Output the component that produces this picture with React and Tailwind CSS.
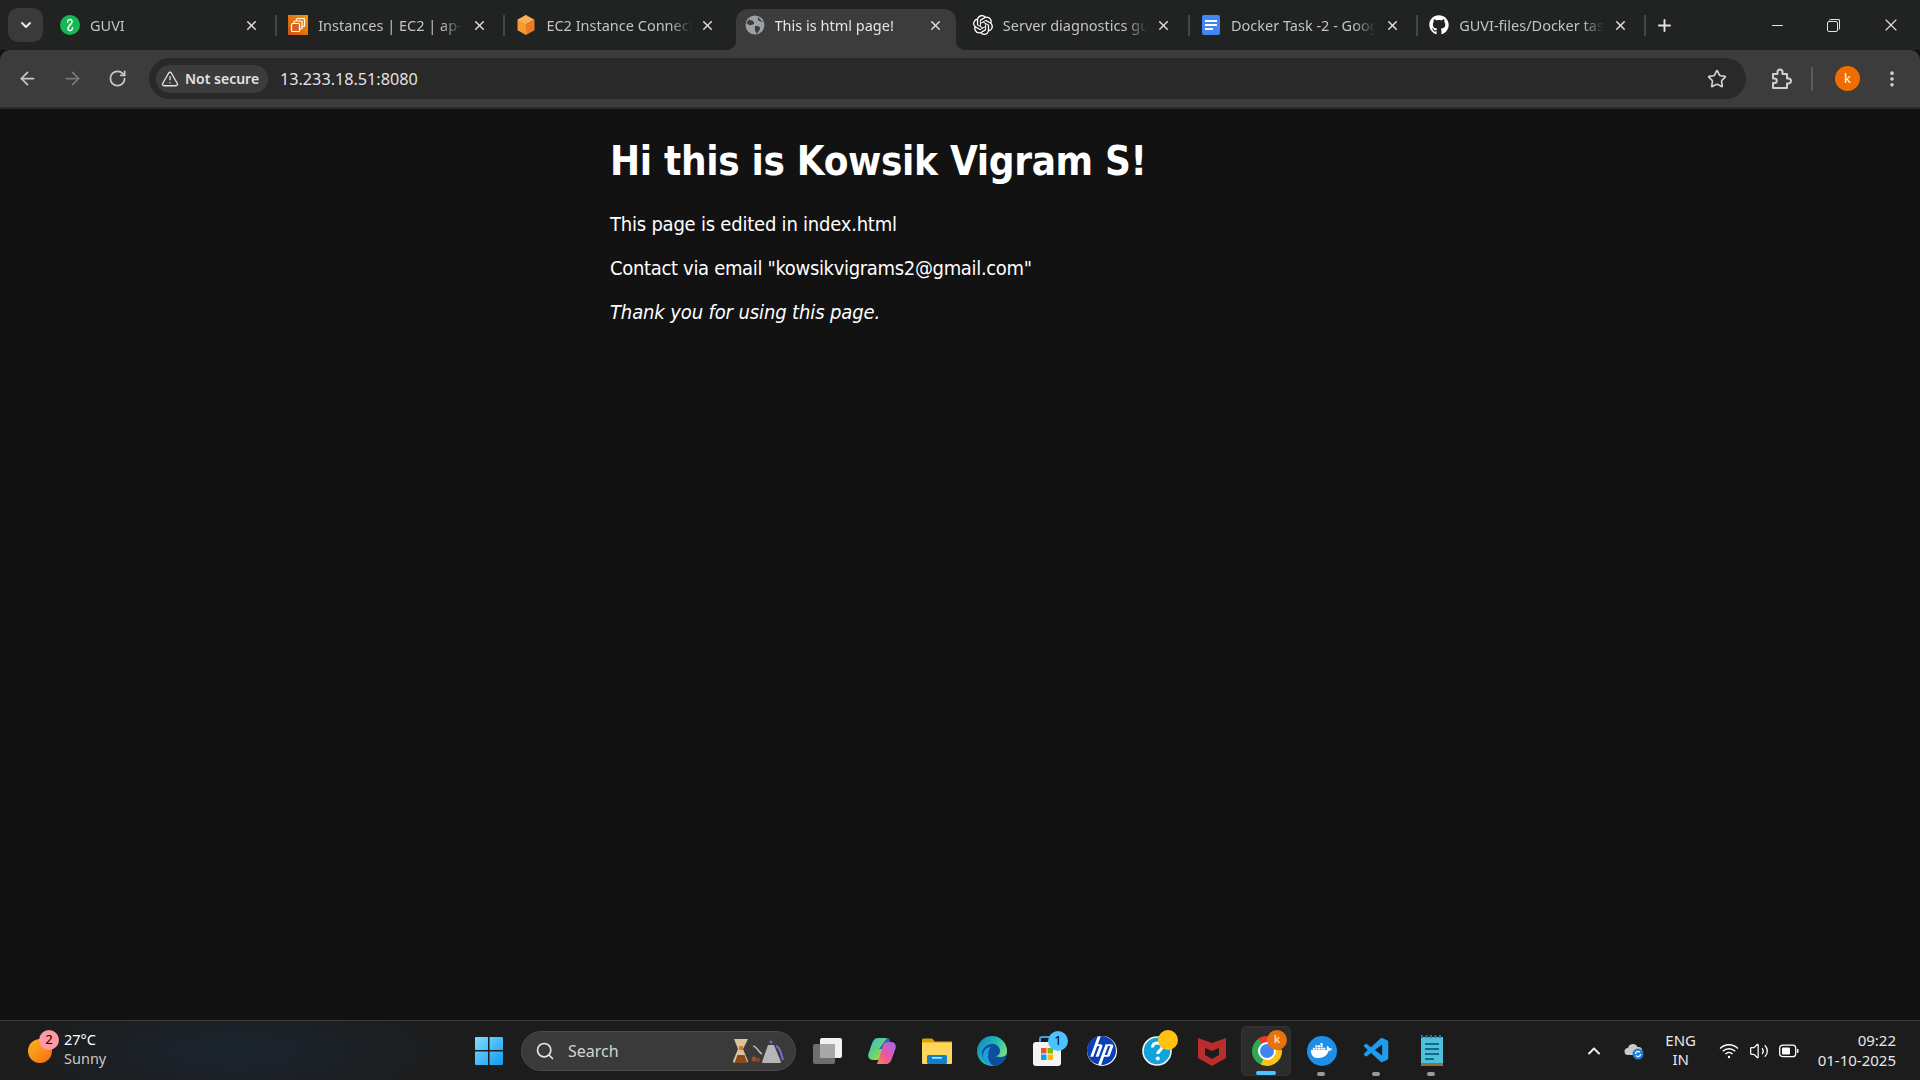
import React from "react";
import { ArrowLeft, ArrowRight, RotateCw, Star, EllipsisVertical, X, Plus, Minus, TriangleAlert, Search, ChevronDown, ChevronUp, Volume2 } from "lucide-react";
import { FaGithub } from "react-icons/fa";
import { SiOpenai, SiDocker, SiHp } from "react-icons/si";
import { VscVscode } from "react-icons/vsc";

/* ───────── Favicons ───────── */
const GuviIcon = () => (
  <svg width="20" height="20" viewBox="0 0 20 20">
    <circle cx="10" cy="10" r="10" fill="#16b853" />
    <path d="M10 4.500a2.200 2.200 0 0 1 1.200 4L9 11.500a2.200 2.200 0 1 0 3 .6M10 15.500a2.200 2.200 0 0 1-1.200-4L11 8.500a2.200 2.200 0 1 0-3-.6" fill="none" stroke="#fff" strokeWidth="1.400" />
  </svg>
);

const AwsInstancesIcon = () => (
  <svg width="20" height="20" viewBox="0 0 20 20">
    <defs>
      <linearGradient id="awsOrange" x1="0" y1="1" x2="1" y2="0">
        <stop offset="0" stopColor="#c8511b" />
        <stop offset="1" stopColor="#ff9900" />
      </linearGradient>
    </defs>
    <rect width="20" height="20" fill="url(#awsOrange)" />
    <rect x="8.500" y="3.500" width="8" height="8" rx="1" fill="none" stroke="#fff" strokeWidth="1.200" />
    <rect x="6" y="6" width="8" height="8" rx="1" fill="#e2701f" stroke="#fff" strokeWidth="1.200" />
    <rect x="3.500" y="8.500" width="8" height="8" rx="1" fill="#d9631d" stroke="#fff" strokeWidth="1.200" />
  </svg>
);

const CubeIcon = () => (
  <svg width="20" height="20" viewBox="0 0 20 20">
    <path d="M10 0L1.500 4.800v10.400L10 20z" fill="#f79a35" />
    <path d="M10 0l8.500 4.800L10 9.500 1.500 4.800z" fill="#fab04f" />
    <path d="M10 9.500l8.500-4.700v10.400L10 20z" fill="#ec7a22" />
  </svg>
);

const GlobeIcon = () => (
  <svg width="20" height="20" viewBox="0 0 20 20">
    <circle cx="10" cy="10" r="9.500" fill="#9aa0a6" />
    <path d="M4 4.500c2 .5 4.500 1 5 3s-1.500 2-3 2.500S3 9.500 1.500 8M12.500 1.500c1 1.500 0 3 1 4s3 .5 5 2.500M11 11c2 0 4 .5 4 2.500s-2 3-3 5.500c-1-2-2-2.500-2-4.500S9.500 11 11 11z" fill="#3c3c3c" />
  </svg>
);

const DocsIcon = () => (
  <svg width="20" height="20" viewBox="0 0 20 20">
    <rect x="1" width="18" height="20" rx="2" fill="#4285f4" />
    <path d="M4 5h12v2H4zM4 9h12v2H4zM4 13h8v2H4z" fill="#fff" />
  </svg>
);

const ExtensionIcon = () => (
  <svg width="22" height="22" viewBox="0 0 22 22" fill="none" stroke="#d0d0d0" strokeWidth="2" strokeLinejoin="round">
    <path d="M3 6h4.500V4a2.500 2.500 0 0 1 5 0v2H17v4.500h1.500a2.500 2.500 0 0 1 0 5H17V20H3v-5h1.500a2 2 0 0 0 0-4.500H3z" />
  </svg>
);

/* ───────── Taskbar icons ───────── */
const WindowsIcon = () => (
  <svg width="30" height="30" viewBox="0 0 30 30">
    <defs>
      <linearGradient id="winBlue" x1="0" y1="0" x2="1" y2="1">
        <stop offset="0" stopColor="#7fdcff" />
        <stop offset="1" stopColor="#0f9bf0" />
      </linearGradient>
    </defs>
    <path d="M1 2a1 1 0 0 1 1-1h12v13H1zM15.500 1H28a1 1 0 0 1 1 1v12H15.500zM1 15.500h13V29H2a1 1 0 0 1-1-1zM15.500 15.500H29V28a1 1 0 0 1-1 1H15.500z" fill="url(#winBlue)" />
  </svg>
);

const TaskViewIcon = () => (
  <svg width="30" height="30" viewBox="0 0 30 30">
    <rect x="1" y="8" width="22" height="20" rx="2" fill="#6e6e6e" />
    <rect x="8" y="2" width="22" height="20" rx="2" fill="#f2f2f2" />
    <rect x="8" y="8" width="15" height="14" fill="#a8a8a8" />
  </svg>
);

const CopilotIcon = () => (
  <svg width="30" height="30" viewBox="0 0 30 30">
    <defs>
      <linearGradient id="copA" x1="0" y1="0" x2="1" y2="1">
        <stop offset="0" stopColor="#2fb7f0" />
        <stop offset="0.550" stopColor="#6ed46a" />
        <stop offset="1" stopColor="#f7c93e" />
      </linearGradient>
      <linearGradient id="copB" x1="1" y1="0" x2="0" y2="1">
        <stop offset="0" stopColor="#a06bf0" />
        <stop offset="0.600" stopColor="#f0569c" />
        <stop offset="1" stopColor="#f78a3c" />
      </linearGradient>
    </defs>
    <path d="M11 2h9l-6 18c-.7 2.500-2 4-4.500 4H6c-4 0-5.500-3-4.500-6.500l3.500-10C6 4 8 2 11 2z" fill="url(#copA)" />
    <path d="M19 28h-9l6-18c.7-2.500 2-4 4.500-4H24c4 0 5.500 3 4.500 6.500l-3.500 10C24 26 22 28 19 28z" fill="url(#copB)" />
    <path d="M20 2c2 0 3 1.500 3 4h-2.500c-2.500 0-3.800 1.500-4.500 4l-1 3h-3z" fill="#2a60d8" />
  </svg>
);

const FolderIcon = () => (
  <svg width="30" height="30" viewBox="0 0 30 30">
    <path d="M0 4a1.500 1.500 0 0 1 1.500-1.500H10l3 3h17V8H0z" fill="#e0a100" />
    <path d="M0 6.500h30V27a1 1 0 0 1-1 1H1a1 1 0 0 1-1-1z" fill="#ffd65c" />
    <rect x="5" y="19" width="20" height="9" rx="1.500" fill="#0f7fce" />
    <rect x="10" y="21" width="10" height="1.600" fill="#bfe6ff" />
  </svg>
);

const EdgeIcon = () => (
  <svg width="30" height="30" viewBox="0 0 30 30">
    <defs>
      <linearGradient id="edgeTop" x1="0" y1="0" x2="1" y2="0.600">
        <stop offset="0" stopColor="#1278c8" />
        <stop offset="0.600" stopColor="#27c0b4" />
        <stop offset="1" stopColor="#7fe27a" />
      </linearGradient>
    </defs>
    <circle cx="15" cy="15" r="15" fill="url(#edgeTop)" />
    <path d="M30 16c0 3-3 5-7 5-3 0-4-1-5-1 3 0 5-2 5-5 0-5-5-8-9-7-6 1-9 6-9 9 0 7 5 13 12 13 7 0 13-6 13-14z" fill="#0c4f9e" />
    <path d="M14 11c-5 0-8 4-8 9 0 5 4 10 11 10-4-2-6-6-6-10 0-4 1-7 3-9z" fill="#1ea0e0" />
  </svg>
);

const StoreIcon = () => (
  <svg width="30" height="30" viewBox="0 0 30 30">
    <path d="M8 6V3a2 2 0 0 1 2-2h10a2 2 0 0 1 2 2v3" fill="none" stroke="#3aa0e0" strokeWidth="2" />
    <rect x="1" y="6" width="28" height="24" rx="3" fill="#f4f4f4" />
    <rect x="9" y="12" width="5.500" height="5.500" fill="#f25022" />
    <rect x="15.500" y="12" width="5.500" height="5.500" fill="#7fba00" />
    <rect x="9" y="18.500" width="5.500" height="5.500" fill="#00a4ef" />
    <rect x="15.500" y="18.500" width="5.500" height="5.500" fill="#ffb900" />
  </svg>
);

const HelpIcon = () => (
  <svg width="30" height="30" viewBox="0 0 30 30">
    <circle cx="15" cy="15" r="14" fill="#11a3dc" stroke="#f4f4f4" strokeWidth="1.600" />
    <path d="M10.500 11.500c0-3 2-4.500 4.800-4.500s4.700 1.600 4.700 4c0 3.500-4.200 3.500-4.200 7" fill="none" stroke="#fff" strokeWidth="3" />
    <circle cx="15.800" cy="22.500" r="2" fill="#fff" />
  </svg>
);

const McafeeIcon = () => (
  <svg width="28" height="30" viewBox="0 0 28 30">
    <path d="M0 2l14 5 14-5v20l-14 8-14-8z M7 12v7l7 4 7-4v-7l-7 3z" fill="#b92d2d" fillRule="evenodd" />
  </svg>
);

const ChromeIcon = () => (
  <div className="flex h-[30px] w-[30px] items-center justify-center rounded-full bg-[conic-gradient(#e33b2e_0deg_85deg,#fbc116_85deg_205deg,#2fa84f_205deg_325deg,#e33b2e_325deg)]">
    <div className="box-content h-[14px] w-[14px] rounded-full border-2 border-white bg-[#3f86f4]" />
  </div>
);

const NotepadIcon = () => (
  <svg width="24" height="32" viewBox="0 0 24 32">
    <rect x="1" y="2" width="22" height="28" fill="#4fc0dc" />
    <rect x="1" y="28" width="22" height="3" fill="#9a6b3c" />
    <path d="M2 0v3M6.500 0v3M11 0v3M15.500 0v3M20 0v3" stroke="#1a7f9c" strokeWidth="2" />
    <path d="M5 9h14M5 14h14M5 19h14M5 24h9" stroke="#136a86" strokeWidth="2" />
  </svg>
);

const SearchArt = () => (
  <svg width="54" height="26" viewBox="0 0 54 26">
    <path d="M2 1h14l-5 10 5 12a2 2 0 0 1-2 2H3a2 2 0 0 1-2-2l5-12z" fill="#d8c3a0" />
    <path d="M2.500 25l3-8h7l3 8z" fill="#8a4a20" />
    <rect x="7" y="8" width="4" height="4" fill="#d97a20" />
    <circle cx="22" cy="21" r="2.500" fill="#9c5030" />
    <circle cx="26" cy="22" r="2.200" fill="#8a4428" />
    <path d="M21 8c4 0 4 5 9 8" fill="none" stroke="#b8b8b8" strokeWidth="1.500" />
    <path d="M36 7h6l7 17a1 1 0 0 1-1 1H31a1 1 0 0 1-1-1z" fill="#b6b6b6" />
    <circle cx="39" cy="4" r="1.500" fill="#7a6ad0" />
    <path d="M44 8c4 1 5 7 7 14" fill="none" stroke="#7a6ad0" strokeWidth="2" />
  </svg>
);

const CloudIcon = () => (
  <svg width="20" height="18" viewBox="0 0 20 18">
    <path d="M4 13a3.500 3.500 0 0 1 0-7 5 5 0 0 1 9.500-1A4 4 0 0 1 15 13z" fill="#c9c9c9" />
    <circle cx="14" cy="12" r="5.500" fill="#1f7fdc" />
    <path d="M11.500 12a2.500 2.500 0 0 1 4.500-1.500M16.500 12a2.500 2.500 0 0 1-4.500 1.500" fill="none" stroke="#fff" strokeWidth="1.200" />
  </svg>
);

const WifiIcon = () => (
  <svg width="20" height="16" viewBox="0 0 20 16" fill="none" stroke="#fff" strokeWidth="1.300">
    <path d="M1 5.500c5-5 13-5 18 0M3.800 8.300c3.500-3.400 8.900-3.400 12.400 0M6.500 11c2-2 5-2 7 0" />
    <circle cx="10" cy="14" r="1.200" fill="#fff" stroke="none" />
  </svg>
);

const BatteryIcon = () => (
  <svg width="20" height="14" viewBox="0 0 20 14">
    <rect x="0.700" y="1.200" width="16" height="11.500" rx="3" fill="none" stroke="#fff" strokeWidth="1.300" />
    <rect x="3" y="3.500" width="8" height="7" rx="1" fill="#fff" />
    <path d="M18 5h.500a1 1 0 0 1 1 1v2a1 1 0 0 1-1 1H18z" fill="#fff" />
  </svg>
);

/* ───────── Tab ───────── */
const Tab = ({ icon, title, active, showSep = true }) => (
  <div className="relative flex h-[50px] w-[228.200px] shrink-0 items-center">
    {active && (
      <>
        <div className="absolute left-px top-[9px] h-[41px] w-[220px] rounded-t-[12px] bg-[#3c3c3c]" />
        <div className="absolute bottom-0 left-[-9px] h-[10px] w-[10px] bg-[radial-gradient(circle_at_0_0,transparent_10px,#3c3c3c_10.500px)]" />
        <div className="absolute bottom-0 left-[221px] h-[10px] w-[10px] bg-[radial-gradient(circle_at_100%_0,transparent_10px,#3c3c3c_10.500px)]" />
      </>
    )}
    <div className="relative ml-[10px] flex h-5 w-5 shrink-0 items-center justify-center">{icon}</div>
    <div className={`relative ml-[10px] w-[100px] flex-1 overflow-hidden whitespace-nowrap text-[14.500px] leading-5 [mask-image:linear-gradient(to_right,#000_85%,transparent_100%)] ${active ? "text-[#e4e4e4]" : "text-[#c2c4c3]"}`}>
      {title}
    </div>
    <div className="relative ml-[6px] flex h-5 w-5 shrink-0 items-center justify-center text-[#dcdcdc]">
      <X size={15} strokeWidth={2.400} />
    </div>
    <div className={`relative ml-[14px] mr-px h-[21px] w-[2px] shrink-0 ${showSep ? "bg-[#444746]" : "bg-transparent"}`} />
  </div>
);

const tabs = [
  { title: "GUVI", icon: <GuviIcon /> },
  { title: "Instances | EC2 | ap-south-1", icon: <AwsInstancesIcon /> },
  { title: "EC2 Instance Connect", icon: <CubeIcon />, showSep: false },
  { title: "This is html page!", icon: <GlobeIcon />, active: true, showSep: false },
  { title: "Server diagnostics guide", icon: <SiOpenai size={20} className="text-white" /> },
  { title: "Docker Task -2 - Google Docs", icon: <DocsIcon /> },
  { title: "GUVI-files/Docker task", icon: <FaGithub size={20} className="text-white" /> },
];

/* ───────── Taskbar slot ───────── */
const Slot = ({ children, active, dot, badge }) => (
  <div className="relative flex h-[50px] w-[55px] shrink-0 items-center justify-center">
    {active && <div className="absolute left-[2px] top-0 h-[50px] w-[50px] rounded-[5px] border border-[#333] bg-[#2c2c2c]" />}
    <div className="relative flex h-[30px] w-[30px] items-center justify-center">{children}</div>
    {badge}
    {dot && <div className="absolute bottom-0 left-[23px] h-[4px] w-[8px] rounded-full bg-[#9a9a9a]" />}
    {active && <div className="absolute bottom-[1px] left-[17px] h-[4px] w-[20px] rounded-full bg-[#4cc2ff]" />}
  </div>
);

export default function App() {
  return (
    <div className="flex h-[1080px] w-[1920px] flex-col overflow-hidden bg-[#121212] font-['Noto_Sans','Open_Sans',sans-serif] text-white">
      {/* Tab strip */}
      <div className="flex h-[50px] shrink-0 items-center bg-[#202322]">
        <div className="ml-2 mr-[7px] flex h-[34px] w-[35px] shrink-0 items-center justify-center rounded-[10px] bg-[#3a3a3a]">
          <ChevronDown size={16} strokeWidth={3} className="text-[#e8e8e8]" />
        </div>
        {tabs.map((t) => (
          <Tab key={t.title} {...t} />
        ))}
        <Plus size={19} strokeWidth={2.400} className="ml-[8px] shrink-0 text-[#e4e4e4]" />
        <Minus size={17} strokeWidth={1.500} className="ml-[95px] shrink-0 text-[#e4e4e4]" />
        <div className="relative ml-[41px] h-[13px] w-[13px] shrink-0">
          <div className="absolute bottom-0 left-0 h-[11px] w-[11px] rounded-[2px] border border-[#e4e4e4]" />
          <div className="absolute right-0 top-0 h-[11px] w-[11px] rounded-[2px] border-r border-t border-[#e4e4e4]" />
        </div>
        <X size={20} strokeWidth={1.300} className="ml-[41px] shrink-0 text-[#e4e4e4]" />
      </div>

      {/* Toolbar */}
      <div className="flex h-[59px] shrink-0 items-center rounded-t-[10px] border-b-2 border-[#2a2a2a] bg-[#3c3c3c]">
        <ArrowLeft size={21} strokeWidth={2} className="ml-[17px] shrink-0 text-[#c7c7c7]" />
        <ArrowRight size={21} strokeWidth={2} className="ml-[24px] shrink-0 text-[#787878]" />
        <RotateCw size={19} strokeWidth={2.200} className="ml-[25px] shrink-0 text-[#c7c7c7]" />
        <div className="ml-[22px] flex h-[41px] w-[1597px] shrink-0 items-center rounded-full bg-[#292929] pl-[7px] pr-[19px]">
          <div className="flex h-[28px] w-[112px] items-center gap-[6px] rounded-full bg-[#3c3c3c] pl-[5px]">
            <TriangleAlert size={18} strokeWidth={1.800} className="shrink-0 text-[#e3e3e3]" />
            <span className="whitespace-nowrap text-[14px] font-semibold text-[#e3e3e3]">Not secure</span>
          </div>
          <span className="ml-[12px] pt-[2px] text-[16.200px] text-[#e3e3e3]">13.233.18.51:8080</span>
          <Star size={20} strokeWidth={2} className="ml-auto text-[#d0d0d0]" />
        </div>
        <div className="ml-[24px] shrink-0"><ExtensionIcon /></div>
        <div className="ml-[19px] h-[24px] w-[2px] shrink-0 bg-[#5a5a5a]" />
        <div className="ml-[22px] flex h-[25px] w-[25px] shrink-0 items-center justify-center rounded-full bg-[#ee6c00] text-[13px]">k</div>
        <EllipsisVertical size={20} strokeWidth={2.400} className="ml-[22px] shrink-0 text-[#d0d0d0]" />
      </div>

      {/* Page */}
      <main className="flex-1 font-['DejaVu_Sans_Condensed','DejaVu_Sans',sans-serif] [font-stretch:condensed]">
        <div className="mx-auto w-[700px] pt-[28px]">
          <h1 className="text-[40px] font-bold leading-[48px] tracking-[-0.320px] text-white">Hi this is Kowsik Vigram S!</h1>
          <p className="mt-[27px] text-[20px] leading-6 tracking-[-0.220px]">This page is edited in index.html</p>
          <p className="mt-5 text-[20px] leading-6 tracking-[-0.330px]">Contact via email "kowsikvigrams2@gmail.com"</p>
          <p className="mt-5 text-[20px] italic leading-6 tracking-[-0.120px]">Thank you for using this page.</p>
        </div>
      </main>

      {/* Taskbar */}
      <footer className="flex h-[60px] shrink-0 items-center border-t border-[#3a3a3a] bg-[#1c1c1c] bg-[radial-gradient(ellipse_220px_60px_at_235px_50%,#1b2530,#1c1c1c)]">
        <div className="relative ml-[28px] h-[24px] w-[24px] shrink-0 rounded-full bg-gradient-to-br from-[#f5b81f] to-[#f9650f]">
          <div className="absolute left-[11px] top-[-9px] flex h-5 w-5 items-center justify-center rounded-full bg-[#ff99a4] text-[13px] text-black">2</div>
        </div>
        <div className="ml-[12px] flex w-[60px] shrink-0 flex-col pb-[3px] text-[14.500px] leading-[19.500px]">
          <span className="text-white">27°C</span>
          <span className="text-[#c8c8c8]">Sunny</span>
        </div>
        <div className="ml-[337px] shrink-0">
          <Slot><WindowsIcon /></Slot>
        </div>
        <div className="ml-[5px] flex h-[40px] w-[275px] shrink-0 items-center rounded-full border border-[#4a4a4a] bg-[#3a3a3a] pl-[13px] pr-[9px]">
          <Search size={20} strokeWidth={2} className="shrink-0 text-[#e4e4e4]" />
          <span className="ml-[13px] text-[16px] text-[#d4d4d4]">Search</span>
          <div className="ml-auto"><SearchArt /></div>
        </div>
        <div className="ml-[3px] flex shrink-0 items-center">
          <Slot><TaskViewIcon /></Slot>
          <Slot><CopilotIcon /></Slot>
          <Slot><FolderIcon /></Slot>
          <Slot><EdgeIcon /></Slot>
          <Slot badge={<div className="absolute left-[29px] top-[5px] flex h-5 w-5 items-center justify-center rounded-full bg-[#4cc2ff] text-[13px] text-black">1</div>}>
            <StoreIcon />
          </Slot>
          <Slot>
            <div className="flex h-[30px] w-[30px] items-center justify-center rounded-full bg-white">
              <SiHp size={29} className="text-[#0b3fb5]" />
            </div>
          </Slot>
          <Slot badge={<div className="absolute left-[29px] top-[4px] h-5 w-5 rounded-full bg-[#ffc30f]" />}>
            <HelpIcon />
          </Slot>
          <Slot><McafeeIcon /></Slot>
          <Slot active badge={<div className="absolute left-[28px] top-[4px] flex h-5 w-5 items-center justify-center rounded-full bg-[#e8710a] text-[11px] font-semibold text-[#ffe0c0]">k</div>}>
            <ChromeIcon />
          </Slot>
          <Slot dot>
            <div className="flex h-[30px] w-[30px] items-center justify-center rounded-full bg-[#1d8fe8]">
              <SiDocker size={21} className="text-white" />
            </div>
          </Slot>
          <Slot dot><VscVscode size={30} className="text-[#1f9cf0]" /></Slot>
          <Slot dot><NotepadIcon /></Slot>
        </div>
        <div className="ml-auto flex shrink-0 items-center pr-[24px]">
          <ChevronUp size={20} strokeWidth={2.400} className="text-[#eaeaea]" />
          <div className="ml-[20px]"><CloudIcon /></div>
          <div className="ml-[17px] flex w-[40px] flex-col items-center pb-[2px] text-[15px] leading-[19px] text-[#e8e8e8]">
            <span>ENG</span>
            <span>IN</span>
          </div>
          <div className="ml-[18px]"><WifiIcon /></div>
          <Volume2 size={20} strokeWidth={1.500} className="ml-[10px] text-white" />
          <div className="ml-[10px]"><BatteryIcon /></div>
          <div className="ml-[19px] flex flex-col items-end pb-[2px] text-[15px] leading-5 text-[#e8e8e8]">
            <span>09:22</span>
            <span>01-10-2025</span>
          </div>
        </div>
      </footer>
    </div>
  );
}
